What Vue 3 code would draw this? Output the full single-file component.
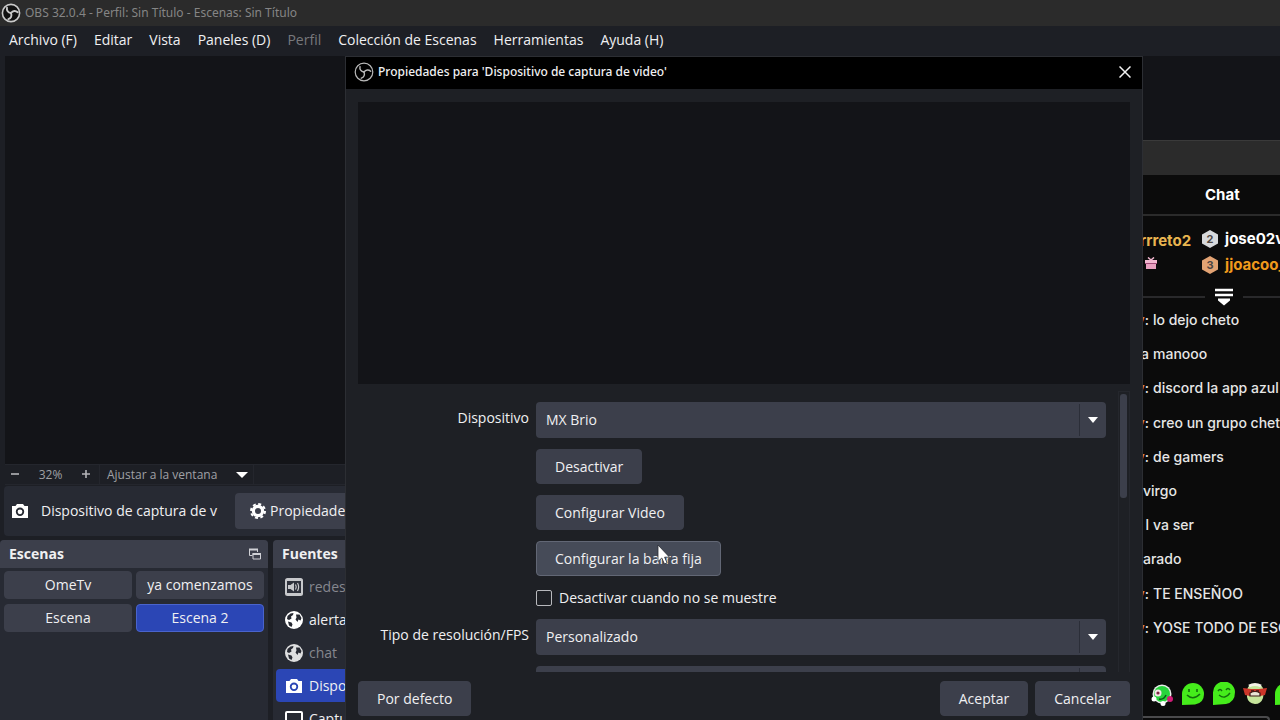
<script setup>
import { ref } from 'vue'

const menus = [
  { label: 'Archivo (F)' },
  { label: 'Editar' },
  { label: 'Vista' },
  { label: 'Paneles (D)' },
  { label: 'Perfil', disabled: true },
  { label: 'Colección de Escenas' },
  { label: 'Herramientas' },
  { label: 'Ayuda (H)' },
]

const scenes = ['OmeTv', 'ya comenzamos', 'Escena', 'Escena 2']
const activeScene = ref('Escena 2')

const sources = [
  { label: 'redes', icon: 'audio', hidden: true },
  { label: 'alertas', icon: 'globe' },
  { label: 'chat', icon: 'globe', hidden: true },
  { label: 'Dispositivo', icon: 'camera', active: true },
  { label: 'Captura', icon: 'screen' },
]

const actions = ['Desactivar', 'Configurar Video', 'Configurar la barra fija']
const disableHidden = ref(false)

const messages = [
  { user: 'y', text: 'lo dejo cheto' },
  { lead: 'a', text: 'manooo' },
  { user: 'y', text: 'discord la app azul' },
  { user: 'y', text: 'creo un grupo cheto' },
  { user: 'y', text: 'de gamers' },
  { lead: '', text: 'virgo', tight: true },
  { lead: 'l', text: 'va ser' },
  { lead: '', text: 'arado', tight: true },
  { user: 'y', text: 'TE ENSEÑOO' },
  { user: 'y', text: 'YOSE TODO DE ESO' },
]
</script>

<template>
  <div class="desktop">
    <main class="obs">
      <header class="titlebar">
        <svg class="logo" viewBox="0 0 20 20" aria-hidden="true">
          <circle cx="10" cy="10" r="8.6" fill="#111" stroke="#c9c9c9" stroke-width="1.6" />
          <g fill="none" stroke="#c9c9c9" stroke-width="1.9" stroke-linecap="round">
            <path d="M10 10C7 9.600 5.400 7.400 6 4.600" />
            <path d="M10 10C7 9.600 5.400 7.400 6 4.600" transform="rotate(120 10 10)" />
            <path d="M10 10C7 9.600 5.400 7.400 6 4.600" transform="rotate(240 10 10)" />
          </g>
        </svg>
        <span>OBS 32.0.4 - Perfil: Sin Título - Escenas: Sin Título</span>
      </header>
      <nav class="menubar">
        <button v-for="m in menus" :key="m.label" type="button" :disabled="m.disabled">{{ m.label }}</button>
      </nav>
      <section class="preview"></section>
      <div class="zoombar">
        <button type="button" class="zoom-btn" aria-label="Alejar"><svg viewBox="0 0 10 10"><path d="M1 4H9" stroke="#b4b4b8" stroke-width="1.6" /></svg></button>
        <span class="zoom-value">32%</span>
        <button type="button" class="zoom-btn" aria-label="Acercar"><svg viewBox="0 0 10 10"><path d="M1 4H9M5 0V8" stroke="#b4b4b8" stroke-width="1.6" /></svg></button>
        <button type="button" class="fit">
          <span>Ajustar a la ventana</span>
          <svg viewBox="0 0 12 6"><path d="M0 0H12L6 6Z" fill="#fff" /></svg>
        </button>
      </div>
      <div class="source-bar">
        <svg class="cam" viewBox="0 0 18 16" aria-hidden="true">
          <path fill="#fff" fill-rule="evenodd" d="M6 1H12L13.5 3H17V15H1V3H4.500ZM9 4.600A4.200 4.200 0 1 0 9 13A4.200 4.200 0 1 0 9 4.600ZM9 6.400A2.400 2.400 0 1 1 9 11.200A2.400 2.400 0 1 1 9 6.400Z" />
        </svg>
        <span class="source-name">Dispositivo de captura de v</span>
        <button type="button" class="props">
          <svg viewBox="0 0 16 16" aria-hidden="true">
            <circle cx="8" cy="8" r="4.600" fill="none" stroke="#fff" stroke-width="3.200" />
            <circle cx="8" cy="8" r="7" fill="none" stroke="#fff" stroke-width="2" stroke-dasharray="3 2.500" />
          </svg>
          <span>Propiedades</span>
        </button>
      </div>
      <div class="docks">
        <section class="dock scenes">
          <header>
            <h2>Escenas</h2>
            <svg viewBox="0 0 12 12" aria-hidden="true"><path d="M3.500 7.500H0.500V1.500H8.500V4" fill="none" stroke="#d0d1d6" /><path d="M0 1.500H9" stroke="#d0d1d6" stroke-width="2" /><path d="M4 5.500H11.500V11H4Z" fill="none" stroke="#d0d1d6" /><path d="M3.500 6H12" stroke="#d0d1d6" stroke-width="2" /></svg>
          </header>
          <div class="scene-grid">
            <button v-for="s in scenes" :key="s" type="button" :class="{ active: s === activeScene }" @click="activeScene = s">{{ s }}</button>
          </div>
        </section>
        <section class="dock sources">
          <header><h2>Fuentes</h2></header>
          <ul>
            <li v-for="s in sources" :key="s.label" :class="{ active: s.active, dim: s.hidden }">
              <svg v-if="s.icon === 'audio'" viewBox="0 0 20 20" aria-hidden="true">
                <rect x="1" y="1" width="18" height="18" rx="2.500" fill="#e4e4e6" />
                <rect x="3" y="4" width="14" height="12" fill="#30333d" />
                <path d="M4 8H6.500L10 5.500V14.500L6.500 12H4Z" fill="#e4e4e6" />
                <path d="M11.500 7.500Q13 10 11.500 12.500M13.500 6Q15.800 10 13.500 14" fill="none" stroke="#e4e4e6" stroke-width="1.200" />
              </svg>
              <svg v-else-if="s.icon === 'globe'" viewBox="0 0 20 20" aria-hidden="true">
                <circle cx="10" cy="10" r="9" fill="#fff" />
                <path d="M3.500 6L6.500 3.500L9.500 3L9 5L7 6.500L7.500 8.500L5 10L3 9ZM12 4.500L15.500 4.500L17.500 8L16.500 10.500L14.500 9.500L13.500 12L11.500 9.500L12.500 7.500ZM4 11.500L7.500 12.500L8.500 14.500L7.500 17L5 15.500Z" fill="#272a33" />
              </svg>
              <svg v-else-if="s.icon === 'camera'" viewBox="0 0 20 20" aria-hidden="true">
                <path fill="#fff" fill-rule="evenodd" d="M7 3H13L14.500 5H18V17H2V5H5.500ZM10 6.600A4.200 4.200 0 1 0 10 15A4.200 4.200 0 1 0 10 6.600ZM10 8.400A2.400 2.400 0 1 1 10 13.200A2.400 2.400 0 1 1 10 8.400Z" />
              </svg>
              <svg v-else viewBox="0 0 20 20" aria-hidden="true">
                <rect x="2" y="3" width="16" height="12" rx="1" fill="none" stroke="#fff" stroke-width="2" />
                <path d="M6 18H14" stroke="#fff" stroke-width="2" />
              </svg>
              <span>{{ s.label }}</span>
            </li>
          </ul>
        </section>
      </div>
    </main>

    <aside class="chat">
      <div class="chat-frame"></div>
      <h2 class="chat-title">Chat</h2>
      <div class="leaders">
        <div class="first">
          <strong>rrreto2</strong>
          <svg viewBox="0 0 12 12" aria-hidden="true"><path d="M1 5H11V12H1Z" fill="#e9a0c0" /><path d="M0 3H12V6H0Z" fill="#f3b7d0" /><path d="M0 6.500H12" stroke="#a24a78" /><path d="M3 0.500L6 3L9 0.500" fill="none" stroke="#f3b7d0" stroke-width="1.500" /></svg>
        </div>
        <div class="others">
          <div class="leader">
            <svg viewBox="0 0 18 18" aria-hidden="true"><path d="M9 0L17 4.500V13.500L9 18L1 13.500V4.500Z" fill="#d7d9dc" /><text x="9" y="13" text-anchor="middle">2</text></svg>
            <strong>jose02v</strong>
          </div>
          <div class="leader third">
            <svg viewBox="0 0 18 18" aria-hidden="true"><path d="M9 0L17 4.500V13.500L9 18L1 13.500V4.500Z" fill="#e3a373" /><text x="9" y="13" text-anchor="middle">3</text></svg>
            <strong>jjoacoo_</strong>
          </div>
        </div>
      </div>
      <div class="divider">
        <svg viewBox="0 0 20 18" aria-hidden="true"><path d="M1 2H19M1 7H19" stroke="#fff" stroke-width="2.600" /><path d="M4 10.500H16V12.500L10 17.500L4 12.500Z" fill="#fff" /></svg>
      </div>
      <ul class="messages">
        <li v-for="m in messages" :key="m.text" :class="{ tight: m.tight }">
          <span class="lead"><b v-if="m.user">{{ m.user }}</b><template v-if="m.user">:</template><template v-else>{{ m.lead }}</template></span>
          <span>{{ m.text }}</span>
        </li>
      </ul>
      <div class="emotes">
        <svg viewBox="0 0 24 24" aria-hidden="true"><circle cx="12" cy="12" r="9.500" fill="#e9eee9" /><circle cx="12" cy="12" r="8" fill="#27d43c" /><circle cx="8" cy="11" r="3.500" fill="#f3e4e8" /><circle cx="8" cy="11" r="1.600" fill="#7b2340" /><path d="M9 17Q14 18 16 13" stroke="#0a5918" fill="none" stroke-width="1.500" /><circle cx="20" cy="17" r="3" fill="#d01c78" /><circle cx="4" cy="17" r="2.500" fill="#fff" /><circle cx="13" cy="21.500" r="2.500" fill="#fff" /></svg>
        <svg viewBox="0 0 24 24" aria-hidden="true"><path d="M1 23V12A11 11 0 0 1 23 12Q23 21 14 22.500Z" fill="#45ec1b" /><path d="M8 7V10M16 7V10M6 13Q12 19 19 12" fill="none" stroke="#126d0c" stroke-width="1.600" /></svg>
        <svg viewBox="0 0 24 24" aria-hidden="true"><path d="M1 23V11A11 11 0 0 1 23 10Q23 20 14 22Z" fill="#45ec1b" /><path d="M6 9Q8 6 10 9M14 8Q16 5 18 8M7 13Q13 18 18 11" fill="none" stroke="#126d0c" stroke-width="1.400" /></svg>
        <svg viewBox="0 0 24 24" aria-hidden="true"><path d="M4 8Q6 1 12 3Q19 1 21 9L20 16Q18 22 12 22Q5 21 4 15Z" fill="#c6e59b" /><path d="M0 6L8 7H16L24 6L22 13L17 14H7L2 13Z" fill="#cb3529" /><path d="M7 14V11Q12 8 17 11V14Z" fill="#e9e4d4" stroke="#3b1714" stroke-width="1.200" /><path d="M8 9H11M13 9H16" stroke="#3b1714" stroke-width="1.500" /><path d="M6 4Q12 1 18 4" stroke="#f4f1e6" stroke-width="3" fill="none" /></svg>
        <svg viewBox="0 0 24 24" aria-hidden="true"><path d="M1 23V12A11 11 0 0 1 23 12Q23 21 14 22.500Z" fill="#45ec1b" /></svg>
      </div>
      <input class="chat-input" type="text" aria-label="Mensaje" />
    </aside>

    <div class="dialog" role="dialog" aria-labelledby="dialog-title">
      <header class="dialog-title">
        <svg class="logo" viewBox="0 0 20 20" aria-hidden="true">
          <circle cx="10" cy="10" r="8.800" fill="#000" stroke="#b9b9b9" stroke-width="1.200" />
          <g fill="none" stroke="#b9b9b9" stroke-width="1.400" stroke-linecap="round">
            <path d="M10 10C7 9.600 5.400 7.400 6 4.600" />
            <path d="M10 10C7 9.600 5.400 7.400 6 4.600" transform="rotate(120 10 10)" />
            <path d="M10 10C7 9.600 5.400 7.400 6 4.600" transform="rotate(240 10 10)" />
          </g>
        </svg>
        <h1 id="dialog-title">Propiedades para 'Dispositivo de captura de video'</h1>
        <button type="button" aria-label="Cerrar"><svg viewBox="0 0 12 12"><path d="M0.500 0.500L11.500 11.500M11.500 0.500L0.500 11.500" stroke="#f2f2f2" stroke-width="1.500" /></svg></button>
      </header>
      <div class="dialog-body">
        <div class="device-preview"></div>
        <div class="scroll-area">
          <form class="form" @submit.prevent>
            <label for="device">Dispositivo</label>
            <div class="select">
              <select id="device"><option>MX Brio</option></select>
              <svg viewBox="0 0 10 6" aria-hidden="true"><path d="M0 0H10L5 6Z" fill="#fff" /></svg>
            </div>
            <div v-for="(a, i) in actions" :key="a" class="field">
              <button type="button" class="btn" :class="{ hover: i === 2 }">{{ a }}</button>
              <svg v-if="i === 2" class="cursor" viewBox="0 0 14 22" aria-hidden="true"><path d="M1 1V17.500L4.800 14L7.500 20L10 18.800L7.600 13.200H12.500Z" fill="#fff" stroke="#2a2c33" stroke-width="0.800" /></svg>
            </div>
            <label class="field check"><input v-model="disableHidden" type="checkbox" /><span>Desactivar cuando no se muestre</span></label>
            <label for="fps">Tipo de resolución/FPS</label>
            <div class="select">
              <select id="fps"><option>Personalizado</option></select>
              <svg viewBox="0 0 10 6" aria-hidden="true"><path d="M0 0H10L5 6Z" fill="#fff" /></svg>
            </div>
            <div class="field select">
              <select aria-label="Resolución"><option></option></select>
            </div>
          </form>
          <div class="scrollbar"><div class="thumb"></div></div>
        </div>
        <footer>
          <button type="button" class="btn">Por defecto</button>
          <span class="spacer"></span>
          <button type="button" class="btn">Aceptar</button>
          <button type="button" class="btn">Cancelar</button>
        </footer>
      </div>
    </div>
  </div>
</template>

<style>
body {
  background: #1c1e24;
}
</style>

<style scoped>
.desktop {
  position: relative;
  height: 100vh;
  overflow: hidden;
  color: #f0f0f2;
  font: 14px/20px "Open Sans", "Noto Sans", sans-serif;
}
.desktop * {
  box-sizing: border-box;
}
h1, h2, ul {
  margin: 0;
  padding: 0;
  list-style: none;
}
button, select, input {
  font: inherit;
  color: inherit;
  margin: 0;
}
button {
  padding: 0;
  border: 0;
  background: none;
}
svg {
  flex: none;
  display: block;
}
.obs {
  display: flex;
  flex-direction: column;
  height: 100%;
  background: #1d1f25;
}
.titlebar {
  display: flex;
  align-items: center;
  gap: 4px;
  height: 26px;
  padding-left: 1px;
  background: #2b2b2b;
  color: #858585;
  font: 12px/20px "Noto Sans", sans-serif;
}
.logo {
  width: 20px;
  height: 20px;
}
.menubar {
  display: flex;
  gap: 17px;
  height: 30px;
  padding: 0 0 2px 9px;
}
.menubar button:disabled {
  color: #77787c;
}
.preview {
  flex: 1;
  margin-left: 5px;
  background: #131418;
}
.zoombar {
  display: flex;
  align-items: center;
  height: 21px;
  margin-left: 5px;
  border-top: 1px solid #24262d;
  border-bottom: 1px solid #24262d;
  color: #a0a1a5;
  font-size: 12px;
}
.zoom-btn {
  width: 20px;
  padding-left: 5px;
}
.zoom-btn svg {
  width: 10px;
  height: 10px;
}
.zoom-value {
  width: 51px;
  text-align: center;
}
.fit {
  display: flex;
  align-items: center;
  justify-content: space-between;
  width: 155px;
  margin-left: 3px;
  padding: 0 5px 0 7px;
  border-left: 1px solid #24262d;
  border-right: 1px solid #24262d;
}
.fit svg {
  width: 12px;
  height: 6px;
}
.source-bar {
  display: flex;
  align-items: center;
  height: 50px;
  margin: 1px 0 4px 4px;
  padding-left: 7px;
  border-radius: 4px;
  background: #272a33;
}
.cam {
  width: 18px;
  height: 16px;
}
.source-name {
  width: 178px;
  margin: 0 16px 0 12px;
  white-space: nowrap;
}
.props {
  display: flex;
  align-items: center;
  gap: 4px;
  height: 36px;
  padding: 0 15px;
  border-radius: 4px;
  background: #3c3f4b;
}
.props svg {
  width: 16px;
  height: 16px;
}
.docks {
  display: flex;
  gap: 5px;
  height: 180px;
}
.dock {
  overflow: hidden;
  border-radius: 4px 4px 0 0;
  background: #272a33;
}
.dock header {
  display: flex;
  align-items: center;
  justify-content: space-between;
  height: 28px;
  padding: 0 7px 0 9px;
  background: #3c3f4b;
}
.dock h2 {
  font-size: 14px;
  font-weight: 700;
}
.dock header svg {
  width: 12px;
  height: 12px;
}
.scenes {
  width: 268px;
}
.sources {
  width: 268px;
}
.scene-grid {
  display: grid;
  grid-template-columns: 1fr 1fr;
  gap: 5px 4px;
  padding: 3px 4px;
}
.scene-grid button {
  height: 28px;
  border: 1px solid #3c3f4b;
  border-radius: 4px;
  background: #3c3f4b;
}
.scene-grid .active {
  border-color: #4a64cc;
  background: #2b46b5;
}
.sources ul {
  padding: 2px 3px;
}
.sources li {
  display: flex;
  align-items: center;
  gap: 5px;
  height: 33px;
  padding: 0 8px;
  border-radius: 4px;
  white-space: nowrap;
}
.sources li svg {
  width: 20px;
  height: 20px;
}
.sources .active {
  background: #2b46b5;
}
.sources .dim {
  color: #85878e;
}
.dim svg {
  opacity: 0.85;
}

/* Chat window, layered over the main window */
.chat {
  position: absolute;
  top: 140px;
  right: 0;
  bottom: 0;
  width: 150px;
  display: flex;
  flex-direction: column;
  overflow: hidden;
  background: #0b0b0b;
  color: #e6e6e6;
  font: 500 14px/20px Inter, sans-serif;
  white-space: nowrap;
}
.chat-frame {
  height: 35px;
  border-top: 1px solid #3a3a3a;
  background: #2b2b2b;
}
.chat-title {
  height: 41px;
  padding-left: 75px;
  border-bottom: 2px solid #2b2b2b;
  font-size: 15px;
  font-weight: 700;
  line-height: 39px;
  color: #fff;
}
.leaders {
  display: flex;
  gap: 10px;
  height: 75px;
  padding: 10px 0 0 10px;
}
.leaders strong {
  font-weight: 700;
  font-size: 15px;
}
.first {
  width: 54px;
  color: #e9b550;
  display: flex;
  flex-direction: column;
  align-items: flex-end;
  padding-top: 5px;
}
.first strong {
  line-height: 20px;
}
.first svg {
  width: 12px;
  height: 12px;
  margin: 6px 34px 0 0;
}
.leader {
  display: flex;
  align-items: center;
  gap: 6px;
  height: 26px;
  color: #fff;
}
.leader svg {
  width: 18px;
  height: 18px;
}
.leader text {
  fill: #4e4643;
  font: 700 11px Inter, sans-serif;
}
.third {
  color: #f09a1c;
}
.divider {
  display: flex;
  align-items: center;
  gap: 9px;
  height: 12px;
}
.divider::before,
.divider::after {
  content: "";
  height: 2px;
  background: #29292b;
}
.divider::before {
  width: 75px;
}
.divider::after {
  flex: 1;
}
.divider svg {
  width: 20px;
  height: 18px;
}
.messages {
  flex: 1;
  display: grid;
  grid-auto-rows: 1fr;
}
.messages li {
  display: flex;
  align-items: center;
  gap: 4px;
}
.messages .lead {
  width: 19px;
  text-align: right;
}
.messages .tight {
  gap: 0;
  padding-left: 13px;
}
.tight .lead {
  display: none;
}
.lead b {
  color: #d4824a;
  font-weight: 600;
}
.emotes {
  display: flex;
  gap: 7px;
  margin-top: 36px;
  padding: 1px 0 10px 20px;
}
.emotes svg {
  width: 24px;
  height: 24px;
}
.chat-input {
  width: 140px;
  height: 4px;
  padding: 0;
  border: 2px solid #4a4a4c;
  border-bottom: 0;
  border-radius: 4px 4px 0 0;
  background: #0b0b0b;
}

/* Properties dialog, layered over both windows */
.dialog {
  position: absolute;
  top: 56px;
  left: 345px;
  right: 137px;
  bottom: 0;
  display: flex;
  flex-direction: column;
  border: 1px solid #2c2e33;
  border-bottom: 0;
  background: #1e2025;
}
.dialog-title {
  display: flex;
  align-items: center;
  gap: 4px;
  height: 32px;
  padding: 0 11px 2px 8px;
  background: #000;
}
.dialog-title h1 {
  flex: 1;
  font: 500 12px/20px "Noto Sans", sans-serif;
}
.dialog-title button svg {
  width: 12px;
  height: 12px;
}
.dialog-body {
  flex: 1;
  min-height: 0;
  display: flex;
  flex-direction: column;
  padding: 13px 12px 4px;
}
.device-preview {
  flex: 1;
  background: #131418;
}
.scroll-area {
  display: flex;
  gap: 12px;
  height: 281px;
  margin-top: 7px;
  overflow: hidden;
}
.form {
  flex: 1;
  display: grid;
  grid-template-columns: 171px 1fr;
  column-gap: 7px;
  row-gap: 11px;
  align-content: start;
  padding-top: 11px;
}
.form > label:not(.check) {
  text-align: right;
  line-height: 32px;
}
.field {
  grid-column: 2;
  position: relative;
}
.btn {
  display: block;
  height: 35px;
  padding: 0 18px;
  border: 1px solid #3c3f4b;
  border-radius: 4px;
  background: #3c3f4b;
}
.btn.hover {
  border-color: #626775;
  background: #464b58;
}
.cursor {
  position: absolute;
  top: 3px;
  left: 121px;
  width: 14px;
  height: 22px;
}
.select {
  position: relative;
}
.select select {
  display: block;
  width: 100%;
  height: 36px;
  padding: 0 10px;
  border: 0;
  border-radius: 4px;
  background: #3c3f4b;
  appearance: none;
}
.select::after {
  content: "";
  position: absolute;
  top: 2px;
  bottom: 2px;
  right: 26px;
  width: 1px;
  background: #2b2e38;
}
.select svg {
  position: absolute;
  top: 15px;
  right: 8px;
  width: 10px;
  height: 6px;
}
.check {
  display: flex;
  align-items: center;
  gap: 7px;
  height: 21px;
}
.check input {
  width: 16px;
  height: 16px;
  border: 1px solid #b8b9bd;
  border-radius: 2px;
  background: #1e2025;
  appearance: none;
}
.check input:checked {
  background: #2b46b5;
}
.scrollbar {
  width: 12px;
  padding: 2px 1px;
  border: 1px solid #25272d;
  border-bottom: 0;
}
.thumb {
  width: 7px;
  height: 104px;
  border-radius: 3px;
  background: #3c3f4b;
}
.dialog footer {
  display: flex;
  gap: 7px;
  margin-top: 9px;
}
.spacer {
  flex: 1;
}
</style>
